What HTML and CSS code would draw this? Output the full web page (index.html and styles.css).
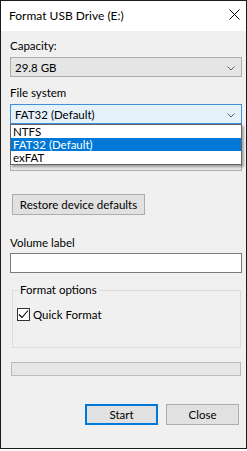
FILE: index.html
```html
<!DOCTYPE html>
<html lang="en">
<head>
<meta charset="UTF-8" />
<meta name="viewport" content="width=device-width, initial-scale=1" />
<title>Format USB Drive (E:)</title>
<link rel="stylesheet" href="styles.css">
</head>
<body>

<div class="window">
  <div class="titlebar">
    <span class="title">Format USB Drive (E:)</span>
    <svg class="close-x" width="11" height="11" viewBox="0 0 11 11" aria-label="Close">
      <path d="M0.5 0.5 L10.5 10.5 M10.5 0.5 L0.5 10.5" stroke="#000" stroke-width="1" fill="none" />
    </svg>
  </div>

  <div class="client">
    <div class="label">Capacity:</div>
    <div class="combo">
      <span>29.8 GB</span>
      <svg class="chev" width="8" height="5" viewBox="0 0 8 5"><path d="M0.5 0.5 L4 4 L7.5 0.5" stroke="#606060" fill="none" /></svg>
    </div>

    <div class="label">File system</div>
    <div class="combo-wrap">
      <div class="combo open">
        <span>FAT32 (Default)</span>
        <svg class="chev" width="8" height="5" viewBox="0 0 8 5"><path d="M0.5 0.5 L4 4 L7.5 0.5" stroke="#606060" fill="none" /></svg>
      </div>
      <ul class="dropdown">
        <li>NTFS</li>
        <li class="selected">FAT32 (Default)</li>
        <li>exFAT</li>
      </ul>
    </div>

    <!-- allocation unit size row, hidden behind the open list -->
    <div class="label"></div>
    <div class="combo"></div>

    <button type="button" class="btn restore">Restore device defaults</button>

    <div class="label label-volume">Volume label</div>
    <div class="textbox"></div>

    <fieldset class="group">
      <legend>Format options</legend>
      <label class="check">
        <span class="box">
          <svg width="11" height="11" viewBox="0 0 11 11"><path d="M1 5.5 L4 8.5 L10 1.5" stroke="#000" stroke-width="1.1" fill="none" /></svg>
        </span>
        Quick Format
      </label>
    </fieldset>

    <div class="progress"></div>

    <div class="actions">
      <button type="button" class="btn default">Start</button>
      <button type="button" class="btn">Close</button>
    </div>
  </div>
</div>

</body>
</html>
```

FILE: styles.css
```css
body {
  margin: 0;
  padding: 0;
  background: #fff;
  font-family: "Segoe UI", Lato, "Liberation Sans", sans-serif;
  font-size: 11.5px;
  color: #000;
}
.window {
  width: 245px;
  height: 447px;
  border: 1px solid #1a1a1a;
  background: #f0f0f0;
}
.titlebar {
  height: 30px;
  background: #fff;
  display: flex;
  align-items: center;
  justify-content: space-between;
  padding: 0 6px 0 8px;
}
.title {
  font-size: 12px;
  margin-top: -2px;
}
.close-x {
  display: block;
  margin-top: -3px;
}
.client {
  padding-left: 9px;
}
.label {
  height: 16px;
  line-height: 16px;
  margin-top: 8px;
}
.client > .label:first-child {
  margin-top: 7px;
}
.combo {
  box-sizing: border-box;
  width: 232px;
  height: 20px;
  margin-top: 3px;
  border: 1px solid #adadad;
  background: #e5e5e5;
  display: flex;
  align-items: center;
  justify-content: space-between;
  padding: 0 6px 0 4px;
}
.combo .chev {
  display: block;
  margin-top: 2px;
}
.combo.open {
  background: #e5f1fb;
  border-color: #3f8fd9;
}
.combo-wrap {
  position: relative;
  width: 232px;
}
.dropdown {
  position: absolute;
  top: 100%;
  left: 0;
  z-index: 2;
  box-sizing: border-box;
  width: 232px;
  margin: 0;
  padding: 0;
  list-style: none;
  background: #fff;
  border: 1px solid #646464;
  box-shadow: 2px 2px 2px rgba(0,0,0,0.3);
}
.dropdown li {
  height: 13px;
  line-height: 13px;
  padding-left: 2px;
}
.dropdown li.selected {
  background: #0078d7;
  color: #fff;
}
.btn {
  box-sizing: border-box;
  height: 21px;
  border: 1px solid #adadad;
  background: #e1e1e1;
  font-family: inherit;
  font-size: 11.5px;
  color: #000;
  padding: 0;
  display: block;
}
.restore {
  width: 133px;
  margin: 23px 0 0 2px;
}
.label-volume {
  margin-top: 20px;
}
.textbox {
  box-sizing: border-box;
  width: 232px;
  height: 20px;
  margin-top: 2px;
  border: 1px solid #7a7a7a;
  background: #fff;
}
.group {
  box-sizing: border-box;
  width: 229px;
  height: 66px;
  margin: 9px 0 0 2px;
  padding: 8px 4px 0;
  border: 1px solid #dcdcdc;
  min-width: 0;
}
.group legend {
  padding: 0 2px;
  margin-left: 1px;
  line-height: 16px;
}
.check {
  display: flex;
  align-items: center;
  gap: 3px;
  height: 16px;
}
.box {
  box-sizing: border-box;
  width: 13px;
  height: 13px;
  border: 1px solid #333;
  background: #fff;
  display: flex;
  align-items: center;
  justify-content: center;
}
.box svg {
  display: block;
}
.progress {
  box-sizing: border-box;
  width: 230px;
  height: 14px;
  margin: 14px 0 0 1px;
  border: 1px solid #bcbcbc;
  background: #e6e6e6;
}
.actions {
  display: flex;
  gap: 8px;
  margin-top: 28px;
  padding-left: 75px;
}
.actions .btn {
  width: 73px;
}
.btn.default {
  border: 2px solid #0078d7;
}
```
